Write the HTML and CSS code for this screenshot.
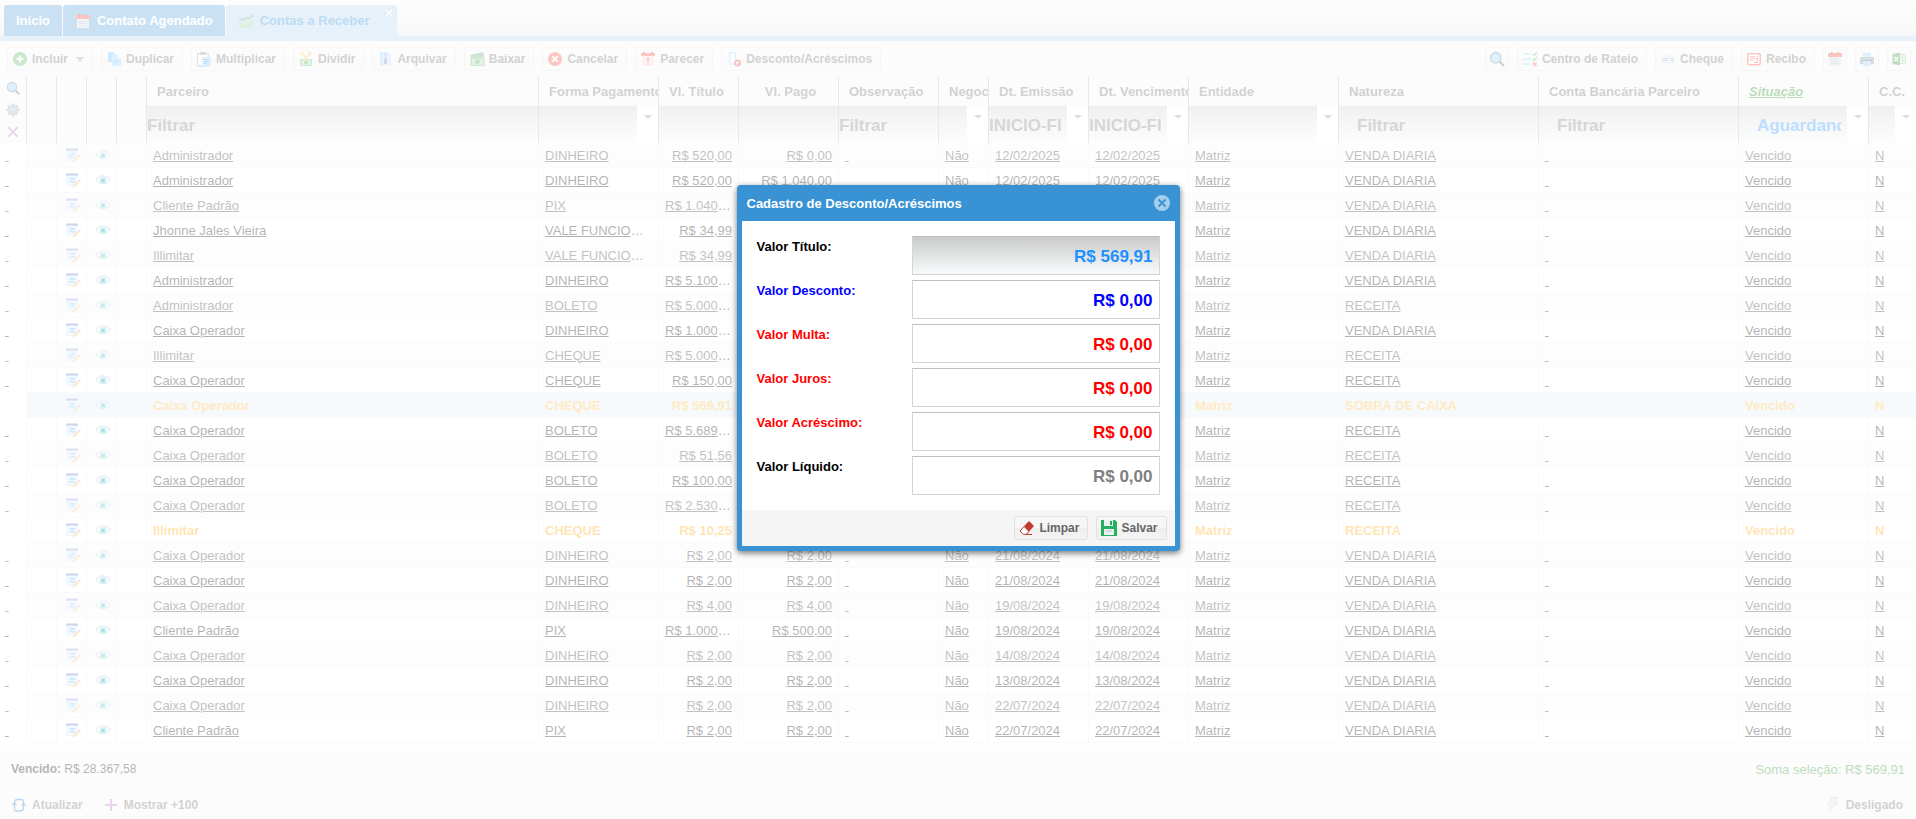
FILE: index.html
```html
<!DOCTYPE html>
<html lang="pt-BR">
<head>
<meta charset="utf-8">
<title>Contas a Receber</title>
<link rel="stylesheet" href="styles.css">
</head>
<body>
<svg class="sprite" aria-hidden="true">
  <symbol id="i-calendar" viewBox="0 0 16 16"><path fill="#cfd8dc" d="M2 5h12v10H2z"/><path fill="#f44336" d="M1 2h14v4H1z"/><path fill="#b71c1c" d="M4 1h1.500v3H4zM10.500 1H12v3h-1.500z"/><path stroke="#a5b5bd" d="M4 8.500h8M4 10.500h8M4 12.500h8"/></symbol>
  <symbol id="i-chart" viewBox="0 0 16 16"><path fill="#8fcf9b" d="M1 15v-4l3-2 2 2 3-3 2 1 4-3v9z"/><path fill="none" stroke="#66a96a" stroke-width="1.500" d="M1 8.500l3-3 2 2 3-3 2 1 4-3.500"/><path fill="#66a96a" d="M11.500 1.500H15V5z"/></symbol>
  <symbol id="i-plus" viewBox="0 0 16 16"><circle cx="8" cy="8" r="7" fill="#4caf50"/><path stroke="#fff" stroke-width="2.200" d="M8 4.500v7M4.500 8h7"/></symbol>
  <symbol id="i-copy" viewBox="0 0 16 16"><path fill="#64b5f6" d="M2 1h5l2 2v8H2z"/><path fill="#90caf9" d="M6 4h6l3 3v8H6z"/><path fill="#e3f2fd" d="M11 4l4 4h-4z"/><path stroke="#42a5f5" d="M8 9.500h5M8 11.500h4"/></symbol>
  <symbol id="i-paste" viewBox="0 0 16 16"><rect x="1.600" y="2.600" width="10.800" height="12.400" rx="1" fill="#fff" stroke="#90a4ae" stroke-width="1.300"/><path fill="#78909c" d="M4 1h6v3H4z"/><path fill="#90caf9" d="M6 6h9v9H6z"/><path stroke="#1e88e5" d="M8 8.500h4M8 10.500h5M8 12.500h3"/></symbol>
  <symbol id="i-split" viewBox="0 0 16 16"><path fill="#66bb6a" d="M2 8h12v7H2z"/><path fill="#a5d6a7" d="M3.500 9h9v5h-9z"/><circle cx="8" cy="11.500" r="2" fill="#43a047"/><path stroke="#ffb74d" stroke-width="1.300" d="M4.500 2.500l4.500 6M11.500 2.500L7 8.500"/><circle cx="4" cy="2.500" r="1.500" fill="none" stroke="#ffb74d"/><circle cx="12" cy="2.500" r="1.500" fill="none" stroke="#ffb74d"/></symbol>
  <symbol id="i-zip" viewBox="0 0 16 16"><path fill="#bbdefb" d="M3 1h8l3 3v11H3z"/><path fill="#90caf9" d="M3 1h3v14H3z"/><path stroke="#7986cb" stroke-width="1.500" d="M8.500 2v7"/><rect x="7.200" y="8" width="2.600" height="5" rx="1" fill="#5c6bc0"/></symbol>
  <symbol id="i-cash" viewBox="0 0 16 16"><path fill="#66a069" d="M1 4l13-3 1.500 5L3 9z"/><path fill="#66bb6a" d="M1.500 6.500h14V15h-14z"/><path fill="#a5d6a7" d="M3 8h11v5.500H3z"/><circle cx="8.500" cy="10.800" r="2.300" fill="#43914a"/></symbol>
  <symbol id="i-cancel" viewBox="0 0 16 16"><circle cx="8" cy="8" r="7" fill="#f44336"/><path stroke="#fff" stroke-width="1.800" d="M5.200 5.200l5.600 5.600M10.800 5.200l-5.600 5.600"/></symbol>
  <symbol id="i-alert" viewBox="0 0 16 16"><path fill="#ffcdd2" d="M2 5h12v10H2z"/><path fill="#f44336" d="M1 2h14v3H1z"/><path stroke="#f44336" stroke-width="1.600" d="M8 6.500v4M8 12v1.500"/><path fill="#c62828" d="M3.500 1H5v2H3.500zM11 1h1.500v2H11z"/></symbol>
  <symbol id="i-discount" viewBox="0 0 16 16"><path fill="#fff" stroke="#90caf9" stroke-width="1.300" d="M4 1.700h5.500V13H4z"/><circle cx="11.500" cy="12" r="3.500" fill="#e53935"/><path stroke="#fff" stroke-width="1.200" d="M10.200 10.700l2.600 2.600M12.800 10.700l-2.600 2.600"/></symbol>
  <symbol id="i-search" viewBox="0 0 16 16"><path stroke="#455a64" stroke-width="2" d="M10.500 10.500L15 15"/><circle cx="6.800" cy="6.800" r="5.300" fill="#90caf9" stroke="#607d8b" stroke-width="1.300"/></symbol>
  <symbol id="i-gear" viewBox="0 0 16 16"><path stroke="#90a4ae" stroke-width="3" d="M8 .5v15M.5 8h15M2.700 2.700l10.600 10.600M13.300 2.700L2.700 13.300"/><circle cx="8" cy="8" r="6" fill="#90a4ae"/><path fill="none" stroke="#dfe6ea" stroke-width=".8" d="M4 9.500L5.300 6.500l1.200 3M8 9.700V6.500h1.700v1.700H8M11.500 6.300v3.400"/></symbol>
  <symbol id="i-x" viewBox="0 0 16 16"><path stroke="#ba68c8" stroke-width="2" d="M2.500 2.500l11 11M13.500 2.500l-11 11"/></symbol>
  <symbol id="i-checklist" viewBox="0 0 16 16"><path stroke="#90caf9" stroke-width="1.500" d="M1 3h8M1 8h8M1 13h8"/><path fill="none" stroke="#66bb6a" stroke-width="1.500" d="M10.500 3l1.500 1.500L15 1M10.500 8L12 9.500 15 6"/><path stroke="#f44336" stroke-width="1.500" d="M11 11.500l3.500 3.500M14.500 11.500L11 15"/></symbol>
  <symbol id="i-cheque" viewBox="0 0 16 16"><path fill="#dfe3f5" d="M1 4h14v9H1z"/><path stroke="#7986cb" d="M3 7.500h6M3 9.500h4"/><path stroke="#81c784" stroke-width="2" d="M12 6.500v4"/></symbol>
  <symbol id="i-receipt" viewBox="0 0 16 16"><rect x="1.800" y="2.800" width="12.400" height="11" rx="1" fill="#fff" stroke="#f44336" stroke-width="1.500"/><path stroke="#f44336" d="M4 5.500h5M4 7.500h5M4 9.500h3M11.500 5v4M8 11.500h4M11 7v4"/></symbol>
  <symbol id="i-printer" viewBox="0 0 16 16"><path fill="#90caf9" d="M4 2h8v4H4z"/><path fill="#78909c" d="M1 6h14v7H1z"/><path fill="#455a64" d="M3 9h10v2H3z"/><path fill="#90caf9" d="M4 10h8v5H4z"/></symbol>
  <symbol id="i-excel" viewBox="0 0 16 16"><path fill="#fff" stroke="#81c784" d="M8 3.500h6.500v9H8z"/><path stroke="#81c784" d="M9 6h5M9 8h5M9 10h5M11.500 4v8"/><path fill="#388e3c" d="M1.500 3L9 1.500v13L1.500 13z"/><path stroke="#fff" stroke-width="1.200" d="M3.500 5.800L7 10.200M7 5.800l-3.500 4.400"/></symbol>
  <symbol id="i-edit" viewBox="0 0 16 16"><path fill="#cfe6fa" d="M1 3h12v11H1z"/><path fill="#5c6bc0" d="M1 1.500h12v2H1z"/><path fill="#64b5f6" d="M5 6h5v2H5zM4 9h6v1.500H4z"/><path stroke="#ffb74d" stroke-width="2.200" d="M8 15l5.500-5.500"/><path stroke="#f48fb1" stroke-width="2" d="M13.500 9.500L15 8"/></symbol>
  <symbol id="i-eye" viewBox="0 0 16 16"><path fill="#fff" stroke="#b0bec5" stroke-width="1.200" d="M1 8c4-5.500 10-5.500 14 0-4 5-10 5-14 0z"/><circle cx="8" cy="8.500" r="3.300" fill="#4dd0e1"/><circle cx="8" cy="8.500" r="1.500" fill="#007c8a"/></symbol>
  <symbol id="i-refresh" viewBox="0 0 16 16"><g fill="none" stroke="#1e78d2" stroke-width="1.300"><path d="M3.500 12V5.500q0-3 3-3h4q2 0 2 2v1M12.500 5v6q0 3-3 3h-4q-2 0-2-2"/><path d="M1.500 8l2-2 2 2M10.500 8.500l2-2 2 2"/></g></symbol>
  <symbol id="i-add" viewBox="0 0 16 16"><path stroke="#ba68c8" stroke-width="2" d="M8 2v12M2 8h12"/></symbol>
  <symbol id="i-bolt" viewBox="0 0 16 16"><path fill="#ddd" stroke="#bbb" stroke-width=".6" d="M6 .5h7L10 6h3L4 15.500 6.500 9H3z"/></symbol>
  <symbol id="i-eraser" viewBox="0 0 16 16"><path fill="#c0392b" d="M10 1l5 5-5 5.500L5 6.200z"/><path fill="#fff" stroke="#c0392b" d="M5 6.500L10 11.500 7 14.300H4.200L1 11z"/><path stroke="#c0392b" d="M7 14.500h6"/></symbol>
  <symbol id="i-save" viewBox="0 0 16 16"><path fill="#27ae60" d="M0 0h14l2 2v14H0z"/><path fill="#ecf0f1" d="M3 0h9v6H3zM3 9h10v6H3z"/><path fill="#27ae60" d="M9 1h2v4H9z"/><path fill="#bdc3c7" d="M4.500 10.500h7v1h-7z"/></symbol>
</svg>

<div class="app">
  <nav class="tabs">
    <button class="tab">Início</button>
    <button class="tab"><svg class="ico"><use href="#i-calendar"/></svg>Contato Agendado</button>
    <div class="tab tab-active">
      <svg class="ico"><use href="#i-chart"/></svg>Contas a Receber
      <button class="tab-close" aria-label="Fechar aba"><svg viewBox="0 0 8 8"><path stroke="#fff" stroke-width="1.200" d="M1 1l6 6M7 1L1 7"/></svg></button>
    </div>
  </nav>

  <div class="toolbar">
    <button class="btn"><svg class="ico"><use href="#i-plus"/></svg>Incluir<span class="caret"></span></button>
    <button class="btn"><svg class="ico"><use href="#i-copy"/></svg>Duplicar</button>
    <button class="btn"><svg class="ico"><use href="#i-paste"/></svg>Multiplicar</button>
    <button class="btn"><svg class="ico"><use href="#i-split"/></svg>Dividir</button>
    <button class="btn"><svg class="ico"><use href="#i-zip"/></svg>Arquivar</button>
    <button class="btn"><svg class="ico"><use href="#i-cash"/></svg>Baixar</button>
    <button class="btn"><svg class="ico"><use href="#i-cancel"/></svg>Cancelar</button>
    <button class="btn"><svg class="ico"><use href="#i-alert"/></svg>Parecer</button>
    <button class="btn"><svg class="ico"><use href="#i-discount"/></svg>Desconto/Acréscimos</button>
    <span class="spacer"></span>
    <button class="btn btn-icon" aria-label="Pesquisar"><svg class="ico"><use href="#i-search"/></svg></button>
    <button class="btn"><svg class="ico"><use href="#i-checklist"/></svg>Centro de Rateio</button>
    <button class="btn"><svg class="ico"><use href="#i-cheque"/></svg>Cheque</button>
    <button class="btn"><svg class="ico"><use href="#i-receipt"/></svg>Recibo</button>
    <button class="btn btn-icon" aria-label="Agenda"><svg class="ico"><use href="#i-calendar"/></svg></button>
    <button class="btn btn-icon" aria-label="Imprimir"><svg class="ico"><use href="#i-printer"/></svg></button>
    <button class="btn btn-icon" aria-label="Exportar planilha"><svg class="ico"><use href="#i-excel"/></svg></button>
  </div>

  <main class="grid-area">
    <table class="grid">
      <colgroup>
        <col class="c-gutter"><col class="c-ico"><col class="c-ico"><col class="c-ico"><col class="c-ico">
        <col><col class="c-120"><col class="c-80"><col class="c-100"><col class="c-100"><col class="c-50">
        <col class="c-100"><col class="c-100"><col class="c-150"><col class="c-200"><col class="c-200"><col class="c-130"><col class="c-48">
      </colgroup>
      <thead>
        <tr class="names">
          <th rowspan="2" class="tools">
            <div class="tool-stack">
              <button aria-label="Filtrar"><svg class="ico"><use href="#i-search"/></svg></button>
              <button aria-label="Configurar"><svg class="ico"><use href="#i-gear"/></svg></button>
              <button aria-label="Limpar filtros"><svg class="ico"><use href="#i-x"/></svg></button>
            </div>
          </th>
          <th rowspan="2"></th><th rowspan="2"></th><th rowspan="2"></th><th rowspan="2"></th>
          <th>Parceiro</th><th>Forma Pagamento</th><th>Vl. Título</th><th class="center">Vl. Pago</th><th>Observação</th><th>Negociado</th>
          <th>Dt. Emissão</th><th>Dt. Vencimento</th><th>Entidade</th><th>Natureza</th><th>Conta Bancária Parceiro</th>
          <th class="sorted">Situação</th><th>C.C.</th>
        </tr>
        <tr class="filters">
          <th><div class="filter"><input aria-label="Parceiro" placeholder="Filtrar"></div></th>
          <th><div class="filter"><input aria-label="Forma Pagamento"><button aria-label="Abrir"></button></div></th>
          <th><div class="filter"><input aria-label="Vl. Título"></div></th>
          <th><div class="filter"><input aria-label="Vl. Pago"></div></th>
          <th><div class="filter"><input aria-label="Observação" placeholder="Filtrar"></div></th>
          <th><div class="filter"><input aria-label="Negociado"><button aria-label="Abrir"></button></div></th>
          <th><div class="filter"><input aria-label="Dt. Emissão" placeholder="INICIO-FIM"><button aria-label="Abrir"></button></div></th>
          <th><div class="filter"><input aria-label="Dt. Vencimento" placeholder="INICIO-FIM"><button aria-label="Abrir"></button></div></th>
          <th><div class="filter"><input aria-label="Entidade"><button aria-label="Abrir"></button></div></th>
          <th><div class="filter indent"><input aria-label="Natureza" placeholder="Filtrar"></div></th>
          <th><div class="filter indent"><input aria-label="Conta Bancária Parceiro" placeholder="Filtrar"></div></th>
          <th><div class="filter indent"><input aria-label="Situação" value="Aguardando"><button aria-label="Abrir"></button></div></th>
          <th><div class="filter"><input aria-label="C.C."><button aria-label="Abrir"></button></div></th>
        </tr>
      </thead>
      <tbody id="rows"></tbody>
    </table>
  </main>

  <footer class="footer">
    <div class="totals">
      <span><b>Vencido:</b> R$ 28.367,58</span>
      <span class="sum">Soma seleção: R$ 569,91</span>
    </div>
    <div class="actions">
      <button class="flat"><svg class="ico"><use href="#i-refresh"/></svg>Atualizar</button>
      <button class="flat"><svg class="ico"><use href="#i-add"/></svg>Mostrar +100</button>
      <span class="spacer"></span>
      <button class="flat"><svg class="ico"><use href="#i-bolt"/></svg>Desligado</button>
    </div>
  </footer>
</div>

<div class="mask">
  <form class="dialog" role="dialog" aria-labelledby="dlg-title">
    <header class="dialog-head">
      <h1 id="dlg-title">Cadastro de Desconto/Acréscimos</h1>
      <button type="button" class="dialog-close" aria-label="Fechar"><svg viewBox="0 0 16 16"><circle cx="8" cy="8" r="8" fill="#a6cdec"/><path stroke="#3892d3" stroke-width="1.800" d="M4.500 4.500l7 7M11.500 4.500l-7 7"/></svg></button>
    </header>
    <div class="dialog-body">
      <div class="field title"><label for="f1">Valor Título:</label><input id="f1" value="R$ 569,91" readonly></div>
      <div class="field discount"><label for="f2">Valor Desconto:</label><input id="f2" value="R$ 0,00"></div>
      <div class="field charge"><label for="f3">Valor Multa:</label><input id="f3" value="R$ 0,00"></div>
      <div class="field charge"><label for="f4">Valor Juros:</label><input id="f4" value="R$ 0,00"></div>
      <div class="field charge"><label for="f5">Valor Acréscimo:</label><input id="f5" value="R$ 0,00"></div>
      <div class="field net"><label for="f6">Valor Líquido:</label><input id="f6" value="R$ 0,00" readonly></div>
    </div>
    <footer class="dialog-foot">
      <button type="button" class="btn"><svg class="ico"><use href="#i-eraser"/></svg>Limpar</button>
      <button type="button" class="btn"><svg class="ico"><use href="#i-save"/></svg>Salvar</button>
    </footer>
  </form>
</div>
<script src="rows.js"></script>
</body>
</html>
```
FILE: styles.css
```css
* { box-sizing: border-box; }
body { margin: 0; font: 13px/15px "Liberation Sans", Arial, sans-serif; color: #000; background: #fff; }
button, input { font: inherit; color: inherit; margin: 0; }
button { cursor: pointer; }
.sprite { display: none; }
.ico { width: 16px; height: 16px; flex: none; }
.spacer { flex: 1; }

.app { display: flex; flex-direction: column; min-height: 100vh; overflow: hidden; }

/* Tabs */
.tabs { display: flex; gap: 1px; padding: 5px 4px 0; background: linear-gradient(#fafafa, #e4e4e4); border-bottom: 5px solid #acd0ee; }
.tab { display: flex; align-items: center; gap: 6px; height: 31px; padding: 0 12px; border: 0; border-radius: 3px 3px 0 0; background: #4b9cd7; color: #fff; font-weight: bold; }
.tab-active { position: relative; background: #acd0ee; color: #218ad8; padding-right: 27px; }
.tab-close { position: absolute; top: 4px; right: 4px; width: 8px; height: 8px; padding: 0; border: 0; background: none; display: flex; }

/* Toolbar */
.toolbar { display: flex; gap: 8px; padding: 6px 5px 6px 7px; background: #f5f5f5; }
.btn { display: flex; align-items: center; gap: 4px; height: 24px; padding: 0 8px 0 4px; border: 1px solid #e1e1e1; border-radius: 3px; background: linear-gradient(#f6f6f6 50%, #eee 50%, #f4f4f4); color: #666; font-size: 12px; font-weight: bold; white-space: nowrap; }
.btn-icon { width: 24px; padding: 0; justify-content: center; }
.caret { width: 0; margin-left: 4px; border: 4px solid transparent; border-top: 5px solid #8f8f8f; border-bottom: 0; }

/* Grid */
.grid-area { flex: 1; background: #fff; }
.grid { width: 100%; table-layout: fixed; border-collapse: separate; border-spacing: 0; }
.c-gutter { width: 26px; }
.c-ico { width: 30px; }
.c-48 { width: 48px; }
.c-50 { width: 50px; }
.c-80 { width: 80px; }
.c-100 { width: 100px; }
.c-120 { width: 120px; }
.c-130 { width: 130px; }
.c-150 { width: 150px; }
.c-200 { width: 200px; }

.grid th { padding: 0; border-left: 1px solid #b3b3b3; background: #f5f5f5; color: #666; text-align: left; white-space: nowrap; overflow: hidden; }
.grid th.tools { border-left: 0; vertical-align: top; }
.grid .names th { height: 29px; padding-left: 10px; }
.grid .names .tools { padding: 3px 0 0 5px; }
.grid .names th.center { text-align: center; padding-right: 6px; }
.grid .names th.sorted { color: #168a16; font-style: italic; text-decoration: underline; }
.tool-stack { display: flex; flex-direction: column; gap: 6px; }
.tool-stack button { display: flex; width: 16px; height: 16px; padding: 1px; border: 0; background: none; }
.tool-stack .ico { width: 14px; height: 14px; }

.filter { display: flex; height: 37px; background: linear-gradient(#c9c9c9, #d6d8d7 25%, #f4f8f7); }
.filter input { flex: 1; min-width: 0; padding: 3px 6px 0 0; border: 0; background: none; font-size: 17px; font-weight: bold; color: #1e90ff; }
.filter.indent input { padding-left: 18px; }
.filter input::placeholder { color: #757575; opacity: 1; }
.filter button { width: 21px; flex: none; padding: 9px 0 0 7px; border: 0; background: #fff; display: flex; }
.filter button::before { content: ""; border: 4px solid transparent; border-top-color: #8f8f8f; border-bottom: 0; }

.grid td { height: 25px; padding: 0 6px; border: solid #ededed; border-width: 0 0 1px 1px; white-space: nowrap; overflow: hidden; text-overflow: ellipsis; }
.grid td:first-child { border: 0; padding-left: 5px; background: #fff; }
.grid td.pic { padding: 0 0 0 8px; line-height: 0; }
.grid td.num { text-align: right; }
.grid td a { color: #000; }
.grid tbody tr:nth-child(odd) td { background: #f9f9f9; }
.grid tbody tr:nth-child(odd) td:first-child { background: #fff; }
.grid tbody tr:nth-child(odd) a { color: #303030; }
.grid tbody tr:nth-child(odd) .ico { opacity: .7; }
.grid tbody tr.late a { color: #ffa500; font-weight: bold; text-decoration: none; }
.grid tbody tr.selected td { background: #e0edf7; }
.grid tbody tr.selected a { color: #ffb733; }

/* Footer */
.footer { background: #f5f5f5; }
.totals { display: flex; justify-content: space-between; align-items: center; height: 36px; padding: 0 11px; font-size: 12px; }
.sum { font-size: 13px; color: #168a16; }
.actions { display: flex; align-items: center; gap: 20px; height: 32px; padding: 4px 13px 0 11px; }
.flat { display: flex; align-items: center; gap: 5px; padding: 0; border: 0; background: none; color: #666; font-size: 12px; font-weight: bold; }

/* Dialog */
.mask { position: absolute; inset: 0; display: flex; justify-content: center; align-items: flex-start; padding-top: 185px; background: rgba(255, 255, 255, .7); }
.dialog { width: 443px; padding: 0 5px 5px; border-radius: 4px; background: #3892d3; box-shadow: 0 2px 6px rgba(0, 0, 0, .55); }
.dialog-head { display: flex; align-items: center; justify-content: space-between; height: 36px; padding: 0 5px; color: #fff; }
.dialog-head h1 { margin: 0; font-size: 13px; }
.dialog-close { width: 16px; height: 16px; padding: 0; border: 0; background: none; display: flex; }
.dialog-body { display: flex; flex-direction: column; gap: 5px; padding: 15px; background: #fff; }
.field { display: flex; justify-content: space-between; font-weight: bold; }
.field label { padding-top: 3px; }
.field input { width: 248px; height: 39px; padding: 3px 6px 0; border: 1px solid #d4d4d4; border-top-color: #c0c0c0; background: #fff; font-size: 17px; text-align: right; }
.title input { color: #1e90ff; background: linear-gradient(#c9c9c9, #d6d8d7 25%, #f8fafc); }
.discount { color: #00f; }
.charge { color: #f00; }
.net input { color: #808080; }
.dialog-foot { display: flex; justify-content: flex-end; gap: 8px; padding: 6px 8px; background: #f5f5f5; }
```
FILE: rows.js
```js
// [parceiro, forma, título, pago, emissão, vencimento, natureza, estado da linha]
const rows = [
  ["Administrador", "DINHEIRO", "520,00", "0,00", "12/02/2025", "12/02/2025", "VENDA DIARIA"],
  ["Administrador", "DINHEIRO", "520,00", "1.040,00", "12/02/2025", "12/02/2025", "VENDA DIARIA"],
  ["Cliente Padrão", "PIX", "1.040,00", "", "", "", "VENDA DIARIA"],
  ["Jhonne Jales Vieira", "VALE FUNCIONARIO", "34,99", "", "", "", "VENDA DIARIA"],
  ["Illimitar", "VALE FUNCIONARIO", "34,99", "", "", "", "VENDA DIARIA"],
  ["Administrador", "DINHEIRO", "5.100,00", "", "", "", "VENDA DIARIA"],
  ["Administrador", "BOLETO", "5.000,00", "", "", "", "RECEITA"],
  ["Caixa Operador", "DINHEIRO", "1.000,00", "", "", "", "VENDA DIARIA"],
  ["Illimitar", "CHEQUE", "5.000,00", "", "", "", "RECEITA"],
  ["Caixa Operador", "CHEQUE", "150,00", "", "", "", "RECEITA"],
  ["Caixa Operador", "CHEQUE", "569,91", "", "", "", "SOBRA DE CAIXA", "late selected"],
  ["Caixa Operador", "BOLETO", "5.689,00", "", "", "", "RECEITA"],
  ["Caixa Operador", "BOLETO", "51,56", "", "", "", "RECEITA"],
  ["Caixa Operador", "BOLETO", "100,00", "", "", "", "RECEITA"],
  ["Caixa Operador", "BOLETO", "2.530,00", "", "", "", "RECEITA"],
  ["Illimitar", "CHEQUE", "10,25", "", "", "", "RECEITA", "late"],
  ["Caixa Operador", "DINHEIRO", "2,00", "2,00", "21/08/2024", "21/08/2024", "VENDA DIARIA"],
  ["Caixa Operador", "DINHEIRO", "2,00", "2,00", "21/08/2024", "21/08/2024", "VENDA DIARIA"],
  ["Caixa Operador", "DINHEIRO", "4,00", "4,00", "19/08/2024", "19/08/2024", "VENDA DIARIA"],
  ["Cliente Padrão", "PIX", "1.000,00", "500,00", "19/08/2024", "19/08/2024", "VENDA DIARIA"],
  ["Caixa Operador", "DINHEIRO", "2,00", "2,00", "14/08/2024", "14/08/2024", "VENDA DIARIA"],
  ["Caixa Operador", "DINHEIRO", "2,00", "2,00", "13/08/2024", "13/08/2024", "VENDA DIARIA"],
  ["Caixa Operador", "DINHEIRO", "2,00", "2,00", "22/07/2024", "22/07/2024", "VENDA DIARIA"],
  ["Cliente Padrão", "PIX", "2,00", "2,00", "22/07/2024", "22/07/2024", "VENDA DIARIA"]
];

const cell = (text, cls = "") => `<td class="${cls}"><a href="#">${text || "&nbsp;"}</a></td>`;
const money = v => cell(v && "R$ " + v, "num");
const icon = id => `<td class="pic"><svg class="ico"><use href="#${id}"/></svg></td>`;

document.getElementById("rows").innerHTML = rows.map(([who, how, total, paid, issued, due, kind, state = ""]) =>
  `<tr class="${state}">` +
  cell("") + "<td></td>" + icon("i-edit") + icon("i-eye") + "<td></td>" +
  cell(who) + cell(how) + money(total) + money(paid) + cell("") + cell(paid && "Não") +
  cell(issued) + cell(due) + cell("Matriz") + cell(kind) + cell("") + cell("Vencido") + cell("N") +
  "</tr>"
).join("");
```
